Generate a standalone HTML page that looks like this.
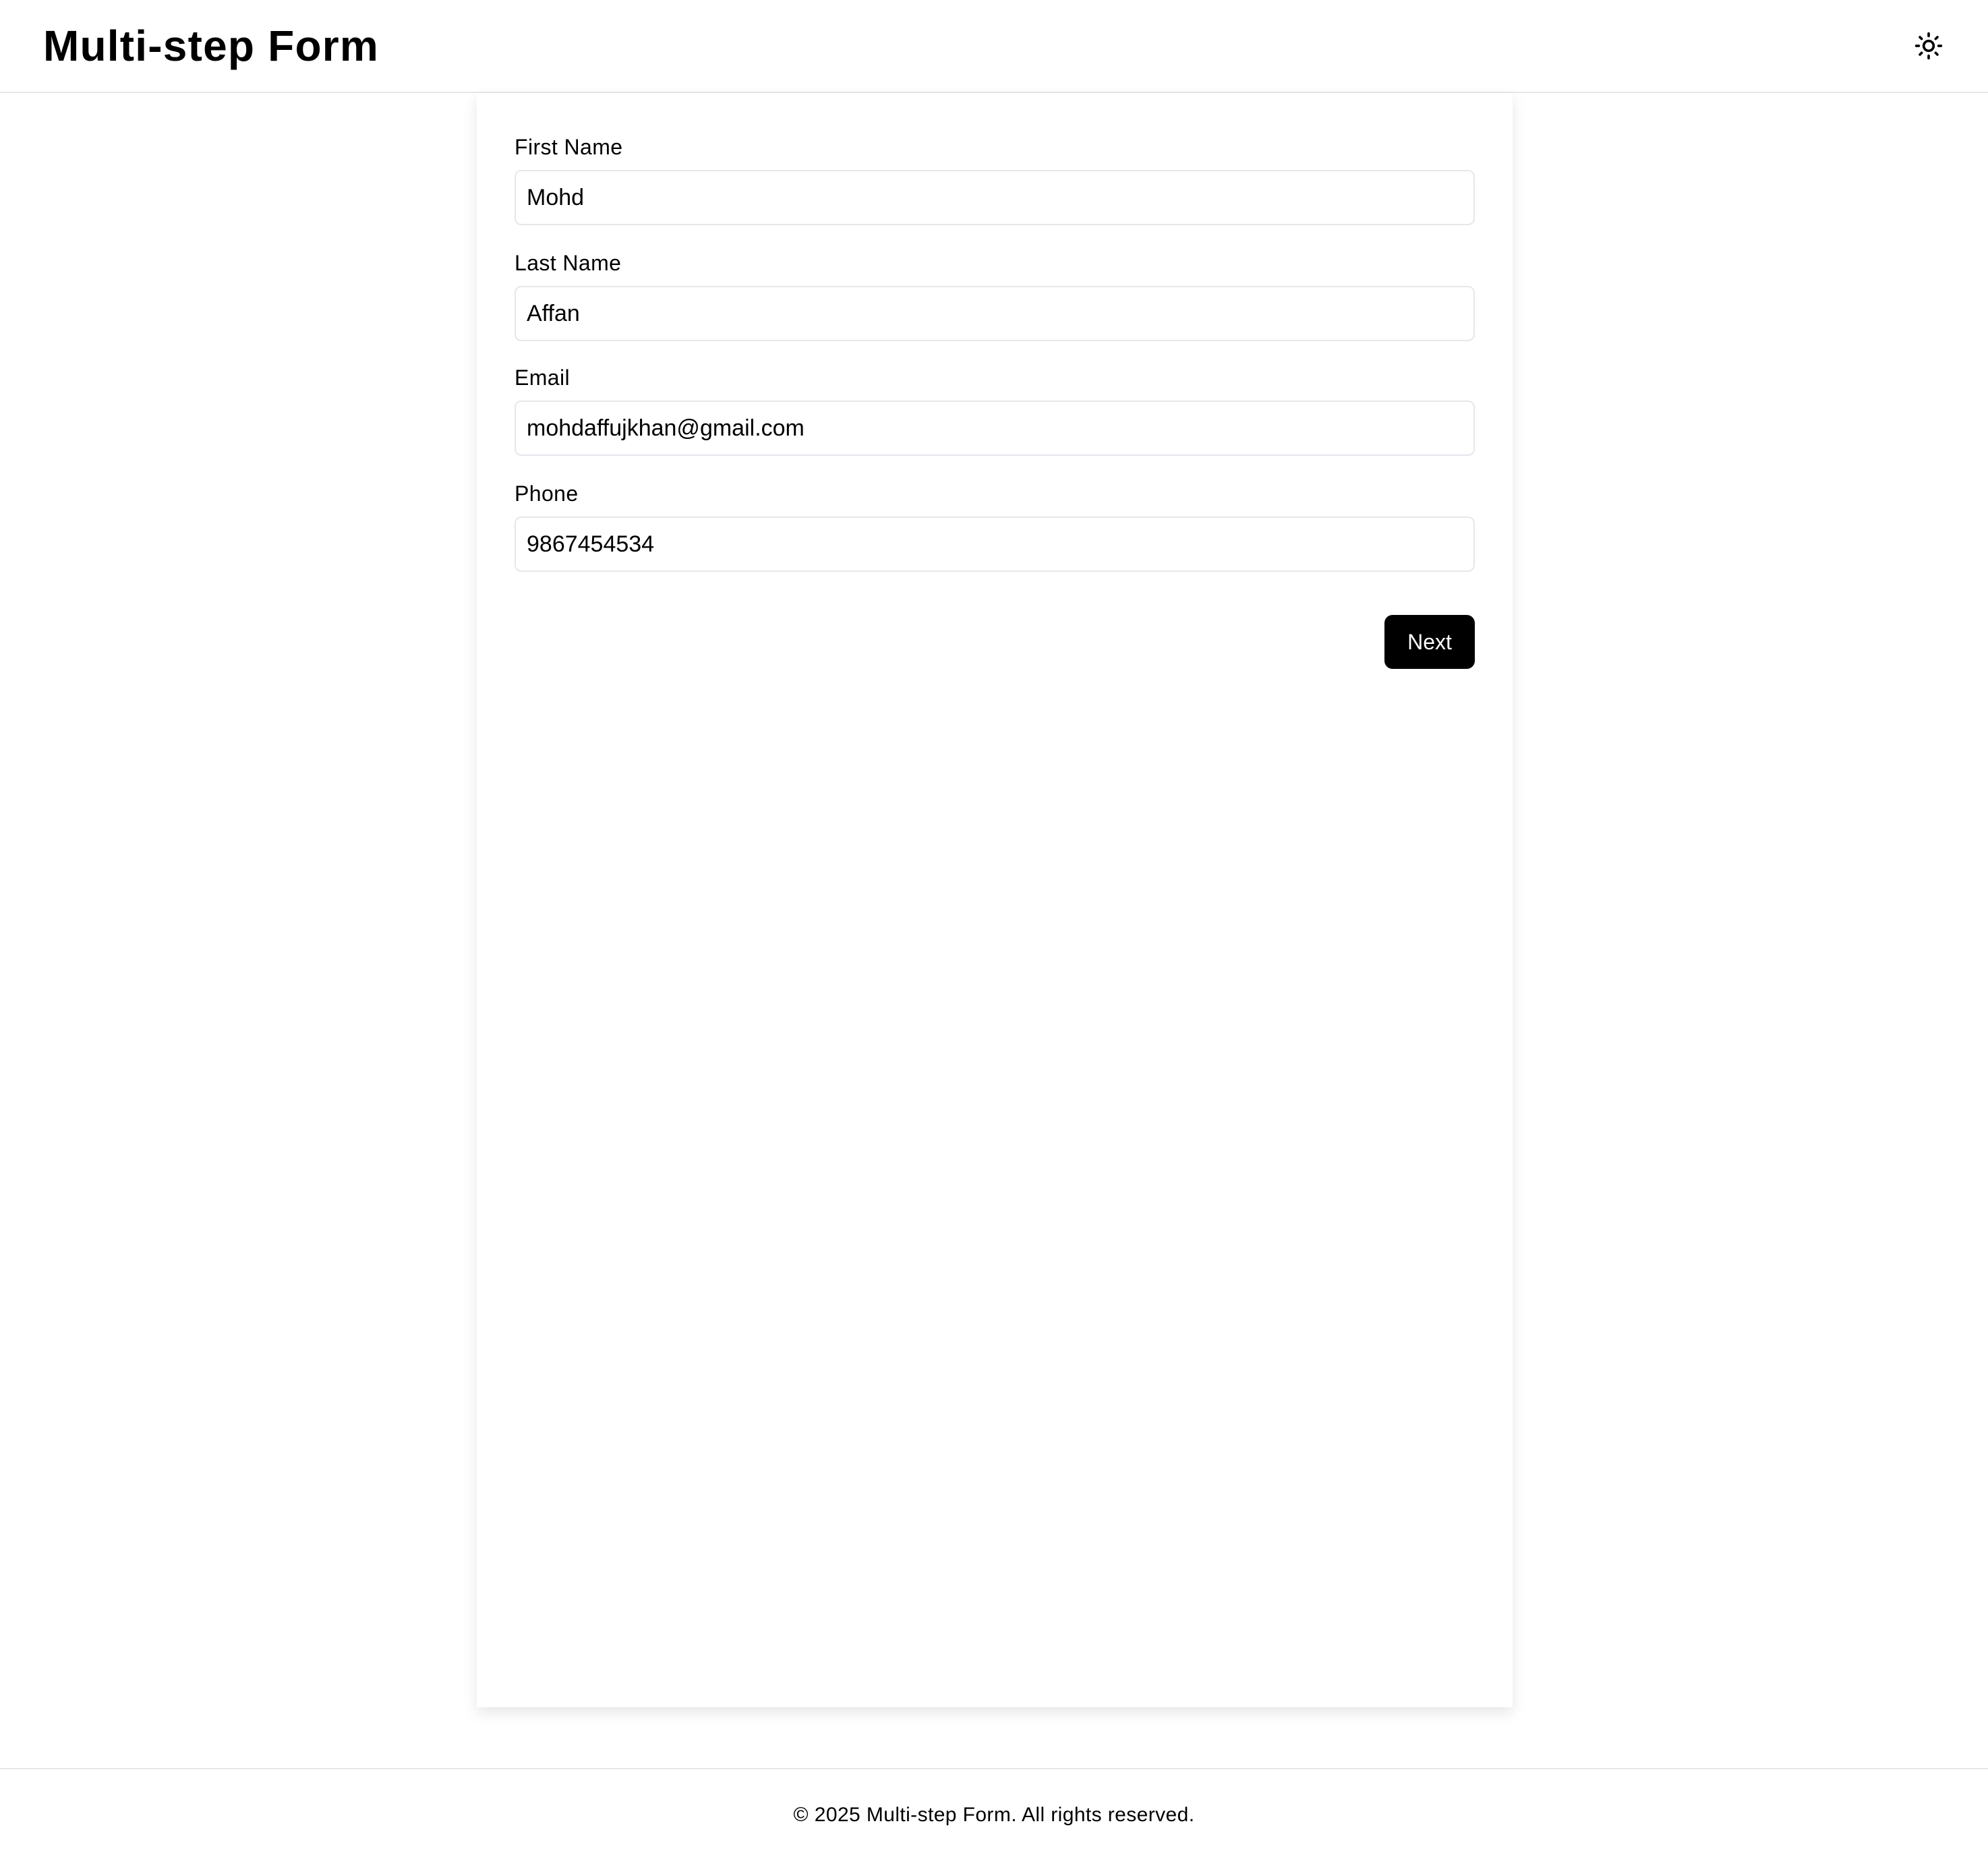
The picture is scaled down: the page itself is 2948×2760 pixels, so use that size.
<!DOCTYPE html>
<html><head><meta charset="utf-8"><style>
html,body{margin:0;padding:0;background:#fff;}
#w{zoom:2;width:1474px;height:1380px;position:relative;font-family:"Liberation Sans",sans-serif;color:#000;overflow:hidden;}
.hdr{position:absolute;left:0;top:0;width:1474px;height:68px;border-bottom:1px solid #e5e7eb;}
.hdr h1{position:absolute;left:32px;top:0;margin:0;line-height:68px;font-size:32px;font-weight:bold;letter-spacing:0.6px;}
.sun{position:absolute;left:1419px;top:23px;}
.card{position:absolute;left:353.5px;top:69px;width:768px;height:1197px;background:#fff;box-shadow:0 4px 10px rgba(0,0,0,0.10);}
.lab{position:absolute;left:28px;font-size:16px;letter-spacing:0.2px;}
.inp{position:absolute;left:28px;width:712px;height:41px;border:1px solid #e5e7eb;border-radius:5px;box-sizing:border-box;font-size:17px;line-height:39px;padding-left:8px;}
.btn{position:absolute;left:673px;top:387px;width:67px;height:40px;background:#000;color:#fff;border-radius:6px;font-size:16px;line-height:40px;text-align:center;}
.ftr{position:absolute;left:0;top:1311px;width:1474px;height:69px;border-top:1px solid #e5e7eb;text-align:center;font-size:15px;letter-spacing:0.2px;line-height:68px;}
</style></head><body><div id="w">
<div class="hdr"><h1>Multi-step Form</h1>
<svg class="sun" width="22" height="22" viewBox="0 0 24 24" fill="none" stroke="#000" stroke-width="2" stroke-linecap="round"><circle cx="12" cy="12" r="4"/><path d="M12 2v2M12 20v2M4.93 4.93l1.41 1.41M17.66 17.66l1.41 1.41M2 12h2M20 12h2M6.34 17.66l-1.41 1.41M19.07 4.93l-1.41 1.41"/></svg>
</div>
<div class="card">
<div class="lab" style="top:31px">First Name</div>
<div class="inp" style="top:57px">Mohd</div>
<div class="lab" style="top:117px">Last Name</div>
<div class="inp" style="top:143px">Affan</div>
<div class="lab" style="top:202px">Email</div>
<div class="inp" style="top:228px">mohdaffujkhan@gmail.com</div>
<div class="lab" style="top:288px">Phone</div>
<div class="inp" style="top:314px">9867454534</div>
<div class="btn">Next</div>
</div>
<div class="ftr">© 2025 Multi-step Form. All rights reserved.</div>
</div></body></html>
